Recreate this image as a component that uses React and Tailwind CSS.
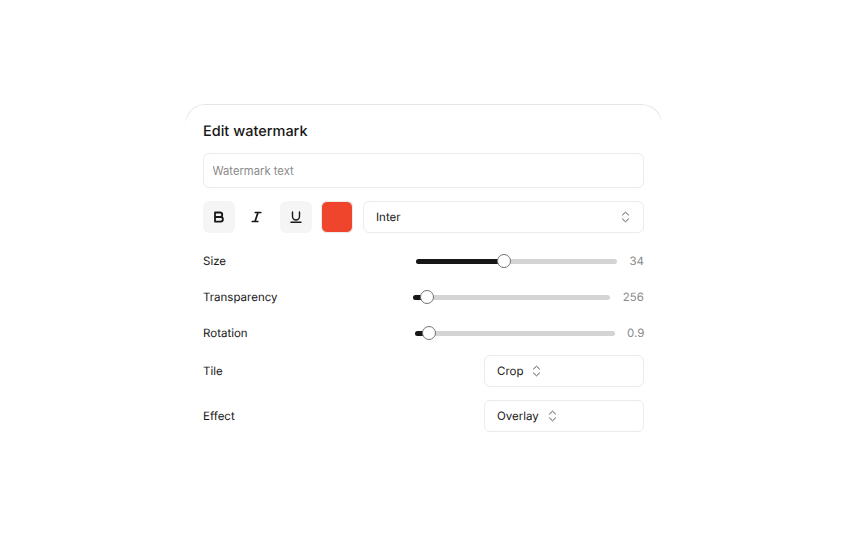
function UpDown({ className = '' }) {
  return (
    <svg width="9" height="12" viewBox="0 0 9 12" fill="none" stroke="currentColor" strokeWidth="1" strokeLinecap="round" strokeLinejoin="round" className={className}>
      <path d="M1.5 4 4.5 1.2 7.5 4" />
      <path d="M1.5 8 4.5 10.8 7.5 8" />
    </svg>
  );
}

function Slider({ width, fill, value, valueWidth }) {
  return (
    <div className="flex items-center gap-3">
      <div className="relative h-[5px] rounded-full bg-[#d4d4d4]" style={{ width }}>
        <div className="absolute left-0 top-0 h-full rounded-full bg-[#171717]" style={{ width: fill }} />
        <div
          className="absolute top-1/2 h-[14px] w-[14px] -translate-x-1/2 -translate-y-1/2 rounded-full border border-[#737373] bg-white"
          style={{ left: fill }}
        />
      </div>
      <span className="text-right text-[11.5px] leading-4 text-[#8a8a8a]" style={{ width: valueWidth }}>
        {value}
      </span>
    </div>
  );
}

function SliderRow({ label, ...slider }) {
  return (
    <div className="flex h-9 items-center justify-between">
      <span className="pt-0.5 text-[11.5px] font-normal text-[#171717]">{label}</span>
      <Slider {...slider} />
    </div>
  );
}

function SelectRow({ label, value, className = '' }) {
  return (
    <div className={`flex items-center justify-between ${className}`}>
      <span className="pt-0.5 text-[11.5px] font-normal text-[#171717]">{label}</span>
      <div className="flex h-8 w-40 items-center gap-[9px] rounded-md border border-[#ebebeb] bg-white px-3 text-[11.5px] font-normal text-[#171717]">
        <span className="pt-0.5">{value}</span>
        <UpDown className="text-[#525252]" />
      </div>
    </div>
  );
}

export default function App() {
  return (
    <div className="flex h-screen justify-center bg-white pt-[104px] font-['Inter',sans-serif] [text-rendering:geometricPrecision]">
      <div className="relative h-fit w-[477px] px-[18px] pt-[19px]">
        {/* card edge only shows at the top, fades out down the corners */}
        <div className="pointer-events-none absolute inset-x-0 top-0 h-5 rounded-t-[20px] border-x border-t border-[#e5e5e5] [mask-image:linear-gradient(to_bottom,black_50%,transparent_100%)]" />

        <h1 className="text-[14.5px] font-medium leading-[18px] text-[#171717]">Edit watermark</h1>

        <input
          placeholder="Watermark text"
          className="mt-[12px] block h-[35px] w-full rounded-md border border-[#ebebeb] px-[8.5px] text-[11.25px] outline-none placeholder:text-[#8a8a8a]"
        />

        <div className="mt-[13px] flex items-center">
          <button className="flex h-8 w-8 items-center justify-center rounded-md bg-[#f5f5f5] text-[#171717]">
            <svg width="12" height="12" viewBox="0 0 12 12" fill="none" stroke="currentColor" strokeWidth="1.8" strokeLinejoin="round">
              <path d="M2 1.5h5a2.2 2.2 0 0 1 0 4.5H2zM2 6h5.6a2.3 2.3 0 0 1 0 4.6H2z" />
            </svg>
          </button>
          <button className="ml-[5px] flex h-8 w-8 items-center justify-center rounded-md text-[#171717]">
            <svg width="12" height="12" viewBox="0 0 12 12" fill="none" stroke="currentColor" strokeWidth="1.7" strokeLinecap="round">
              <path d="M5.3 1.5h5.5M2.3 10.5h5.5M8 1.5l-3 9" />
            </svg>
          </button>
          <button className="ml-[8px] flex h-8 w-8 items-center justify-center rounded-md bg-[#f5f5f5] text-[#171717]">
            <svg width="12" height="12" viewBox="0 0 12 12" fill="none" stroke="currentColor" strokeWidth="1.4" strokeLinecap="round">
              <path d="M2.5 1v4.5a3.5 3.5 0 0 0 7 0V1M1 11.2h10" />
            </svg>
          </button>
          <div className="ml-[9px] h-8 w-8 rounded-md border border-[#ebebeb] bg-[#ef452c]" />
          <div className="ml-[10px] flex h-8 flex-1 items-center justify-between rounded-md border border-[#ebebeb] pl-3 pr-[13px] text-[11.5px] font-normal text-[#171717]">
            <span className="pt-0.5">Inter</span>
            <UpDown className="text-[#525252]" />
          </div>
        </div>

        <div className="mt-[10px]">
          <SliderRow label="Size" width={201} fill={88} value="34" valueWidth={15} />
          <SliderRow label="Transparency" width={197} fill={14} value="256" valueWidth={22} />
          <SliderRow label="Rotation" width={200} fill={14} value="0.9" valueWidth={17} />
        </div>

        <SelectRow label="Tile" value="Crop" className="mt-[4px]" />
        <SelectRow label="Effect" value="Overlay" className="mt-[13px]" />
      </div>
    </div>
  );
}
